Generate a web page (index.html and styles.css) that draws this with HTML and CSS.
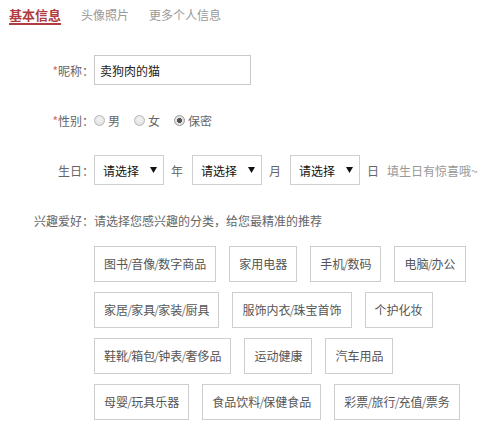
FILE: index.html
```html
<!DOCTYPE html>
<html lang="zh-CN">
<head>
<meta charset="utf-8">
<title>基本信息</title>
<link rel="stylesheet" href="styles.css">
</head>
<body>
<div class="tabs">
  <span class="tab active">基本信息</span>
  <span class="tab">头像照片</span>
  <span class="tab">更多个人信息</span>
</div>
<div class="form">
  <div class="row">
    <label class="label"><i class="req">*</i>昵称：</label>
    <input class="text-input" type="text" value="卖狗肉的猫">
  </div>
  <div class="row">
    <span class="label"><i class="req">*</i>性别：</span>
    <span class="radio"><span class="dot"></span>男</span>
    <span class="radio"><span class="dot"></span>女</span>
    <span class="radio"><span class="dot checked"></span>保密</span>
  </div>
  <div class="row">
    <span class="label">生日：</span>
    <span class="select"><span>请选择</span><svg class="arrow" width="7" height="6" viewBox="0 0 7 6"><path d="M0 0H7L3.5 6Z" fill="#111"/></svg></span>
    <span class="unit">年</span>
    <span class="select"><span>请选择</span><svg class="arrow" width="7" height="6" viewBox="0 0 7 6"><path d="M0 0H7L3.5 6Z" fill="#111"/></svg></span>
    <span class="unit">月</span>
    <span class="select"><span>请选择</span><svg class="arrow" width="7" height="6" viewBox="0 0 7 6"><path d="M0 0H7L3.5 6Z" fill="#111"/></svg></span>
    <span class="unit">日</span>
    <span class="hint">填生日有惊喜哦~</span>
  </div>
  <div class="row">
    <span class="label">兴趣爱好：</span>
    <span class="desc">请选择您感兴趣的分类，给您最精准的推荐</span>
  </div>
  <div class="tags">
    <span class="tag">图书<span class="sep">/</span>音像<span class="sep">/</span>数字商品</span>
    <span class="tag">家用电器</span>
    <span class="tag">手机<span class="sep">/</span>数码</span>
    <span class="tag">电脑<span class="sep">/</span>办公</span>
    <span class="tag">家居<span class="sep">/</span>家具<span class="sep">/</span>家装<span class="sep">/</span>厨具</span>
    <span class="tag">服饰内衣<span class="sep">/</span>珠宝首饰</span>
    <span class="tag">个护化妆</span>
    <span class="tag">鞋靴<span class="sep">/</span>箱包<span class="sep">/</span>钟表<span class="sep">/</span>奢侈品</span>
    <span class="tag">运动健康</span>
    <span class="tag">汽车用品</span>
    <span class="tag">母婴<span class="sep">/</span>玩具乐器</span>
    <span class="tag">食品饮料<span class="sep">/</span>保健食品</span>
    <span class="tag">彩票<span class="sep">/</span>旅行<span class="sep">/</span>充值<span class="sep">/</span>票务</span>
  </div>
</div>
</body>
</html>
```

FILE: styles.css
```css
* { box-sizing: border-box; }
html, body { margin: 0; padding: 0; background: #fff; }
body {
  width: 490px;
  height: 428px;
  overflow: hidden;
  font-family: "Microsoft YaHei", "Noto Sans CJK SC", "Noto Sans", sans-serif;
  font-size: 12px;
  color: #666;
}
.tabs {
  display: flex;
  align-items: baseline;
  gap: 20px;
  padding: 7px 0 0 9px;
}
.tab {
  font-size: 12px;
  line-height: 16px;
  color: #999;
}
.tab.active {
  font-size: 13px;
  font-weight: bold;
  color: #b13b40;
  border-bottom: 2px solid #b13b40;
}
.form {
  margin-top: 30px;
}
.row {
  display: flex;
  align-items: center;
  height: 30px;
  margin-bottom: 20px;
}
.label {
  width: 94px;
  flex: none;
  text-align: right;
  color: #666;
}
.req {
  font-style: normal;
  color: #d9696b;
}
.text-input {
  width: 157px;
  height: 30px;
  border: 1px solid #c9c9c9;
  padding: 0 5px;
  font: inherit;
  font-size: 12px;
  color: #222;
  outline: none;
  margin: 0;
}
.radio {
  display: flex;
  align-items: center;
  margin-right: 14px;
  color: #666;
}
.dot {
  width: 11px;
  height: 11px;
  border-radius: 50%;
  border: 1px solid #b9b9b9;
  background: radial-gradient(circle at 50% 40%, #f4f4f4 0%, #d9d9d9 100%);
  margin-right: 3px;
}
.dot.checked {
  background: radial-gradient(circle, #555 0, #555 2.3px, #e8e8e8 2.8px, #d4d4d4 100%);
  border-color: #9a9a9a;
}
.select {
  width: 70px;
  height: 30px;
  border: 1px solid #cfcfcf;
  display: flex;
  align-items: center;
  justify-content: space-between;
  padding: 0 6px 0 8px;
  color: #111;
}
.arrow { display: block; }
.unit {
  margin: 0 9px 0 7px;
  color: #666;
}
.hint {
  margin-left: -1px;
  color: #999;
}
.desc { color: #666; }
.tags {
  display: flex;
  flex-wrap: wrap;
  column-gap: 13px;
  row-gap: 10px;
  margin-left: 94px;
  margin-top: -9px;
  width: 396px;
}
.tag {
  height: 36px;
  line-height: 34px;
  padding: 0 9px;
  border: 1px solid #cecece;
  color: #555;
  white-space: nowrap;
}
.sep {
  margin: 0 -0.8px;
  color: #777;
}
```
